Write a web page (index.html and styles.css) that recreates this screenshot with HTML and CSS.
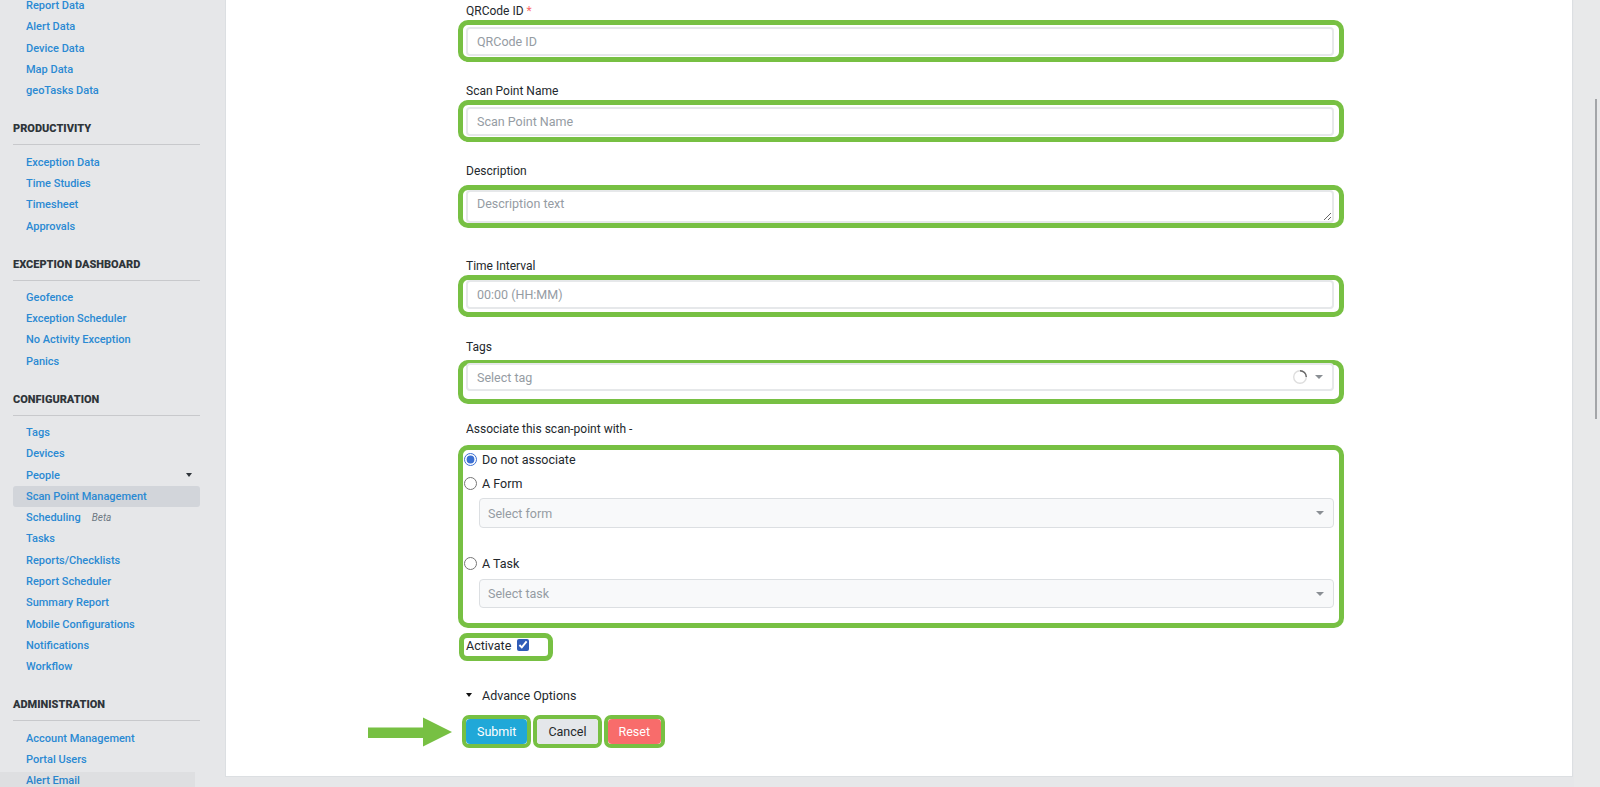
FILE: index.html
```html
<!DOCTYPE html>
<html lang="en">
<head>
  <meta charset="UTF-8">
  <meta name="viewport" content="width=device-width, initial-scale=1.0">
  <title>Scan Point Management</title>
  <link rel="stylesheet" href="styles.css">
</head>

<body>
  <div class="page">
    <!-- Sidebar -->
    <aside class="sidebar">
      <ul class="nav nav-first">
        <li><a class="nav-link" href="#">Report Data</a></li>
        <li><a class="nav-link" href="#">Alert Data</a></li>
        <li><a class="nav-link" href="#">Device Data</a></li>
        <li><a class="nav-link" href="#">Map Data</a></li>
        <li><a class="nav-link" href="#">geoTasks Data</a></li>
      </ul>

      <div class="nav-section">
        <h4 class="nav-title">PRODUCTIVITY</h4>
        <ul class="nav">
          <li><a class="nav-link" href="#">Exception Data</a></li>
          <li><a class="nav-link" href="#">Time Studies</a></li>
          <li><a class="nav-link" href="#">Timesheet</a></li>
          <li><a class="nav-link" href="#">Approvals</a></li>
        </ul>
      </div>

      <div class="nav-section">
        <h4 class="nav-title">EXCEPTION DASHBOARD</h4>
        <ul class="nav">
          <li><a class="nav-link" href="#">Geofence</a></li>
          <li><a class="nav-link" href="#">Exception Scheduler</a></li>
          <li><a class="nav-link" href="#">No Activity Exception</a></li>
          <li><a class="nav-link" href="#">Panics</a></li>
        </ul>
      </div>

      <div class="nav-section">
        <h4 class="nav-title">CONFIGURATION</h4>
        <ul class="nav">
          <li><a class="nav-link" href="#">Tags</a></li>
          <li><a class="nav-link" href="#">Devices</a></li>
          <li><a class="nav-link nav-dropdown" href="#">People <span class="nav-caret"></span></a></li>
          <li><a class="nav-link active" href="#">Scan Point Management</a></li>
          <li><a class="nav-link" href="#">Scheduling <span class="badge-beta">Beta</span></a></li>
          <li><a class="nav-link" href="#">Tasks</a></li>
          <li><a class="nav-link" href="#">Reports/Checklists</a></li>
          <li><a class="nav-link" href="#">Report Scheduler</a></li>
          <li><a class="nav-link" href="#">Summary Report</a></li>
          <li><a class="nav-link" href="#">Mobile Configurations</a></li>
          <li><a class="nav-link" href="#">Notifications</a></li>
          <li><a class="nav-link" href="#">Workflow</a></li>
        </ul>
      </div>

      <div class="nav-section">
        <h4 class="nav-title">ADMINISTRATION</h4>
        <ul class="nav">
          <li><a class="nav-link" href="#">Account Management</a></li>
          <li><a class="nav-link" href="#">Portal Users</a></li>
          <li><a class="nav-link" href="#">Alert Email</a></li>
        </ul>
      </div>

      <!-- browser status bubble -->
      <div class="status-url"></div>
    </aside>

    <!-- Main content -->
    <main class="main">
      <div class="card">
        <form class="scan-form">
          <div class="form-group">
            <label class="form-label">QRCode ID <span class="required">*</span></label>
            <div class="ring">
              <input class="form-control" type="text" placeholder="QRCode ID">
            </div>
          </div>

          <div class="form-group">
            <label class="form-label">Scan Point Name</label>
            <div class="ring">
              <input class="form-control" type="text" placeholder="Scan Point Name">
            </div>
          </div>

          <div class="form-group group-desc">
            <label class="form-label">Description</label>
            <div class="ring ring-desc">
              <textarea class="form-control textarea" placeholder="Description text"></textarea>
            </div>
          </div>

          <div class="form-group group-time">
            <label class="form-label">Time Interval</label>
            <div class="ring ring-time">
              <input class="form-control" type="text" placeholder="00:00 (HH:MM)">
            </div>
          </div>

          <div class="form-group group-tags">
            <label class="form-label">Tags</label>
            <div class="ring ring-tags">
              <div class="select select-tags">
                <span class="select-placeholder">Select tag</span>
                <span class="select-icons">
                  <svg class="spinner" width="16" height="16" viewBox="0 0 16 16">
                    <circle cx="8" cy="8" r="6.3" fill="none" stroke="#dedede" stroke-width="1.4"/>
                    <path d="M8 1.7 A6.3 6.3 0 0 1 14.3 8" fill="none" stroke="#666" stroke-width="1.4"/>
                  </svg>
                  <span class="caret"></span>
                </span>
              </div>
            </div>
          </div>

          <div class="form-group group-assoc">
            <label class="form-label">Associate this scan-point with -</label>
            <div class="ring ring-assoc">
              <label class="radio-row"><input type="radio" name="assoc" checked> Do not associate</label>
              <label class="radio-row"><input type="radio" name="assoc"> A Form</label>
              <div class="select select-sub select-form">
                <span class="select-placeholder">Select form</span>
                <span class="caret"></span>
              </div>
              <label class="radio-row radio-task"><input type="radio" name="assoc"> A Task</label>
              <div class="select select-sub select-task">
                <span class="select-placeholder">Select task</span>
                <span class="caret"></span>
              </div>
            </div>
          </div>

          <div class="activate-row">
            <label class="ring ring-activate">Activate <input type="checkbox" checked></label>
          </div>

          <div class="advance">
            <span class="advance-caret"></span>
            Advance Options
          </div>

          <div class="actions">
            <svg class="pointer-arrow" width="84" height="30" viewBox="0 0 84 30">
              <polygon points="0,10.5 55,10.5 55,0.5 84,15 55,29.5 55,21 0,21" fill="#77c043"/>
            </svg>
            <span class="ring ring-btn"><button type="button" class="btn btn-submit">Submit</button></span>
            <span class="ring ring-btn"><button type="button" class="btn btn-cancel">Cancel</button></span>
            <span class="ring ring-btn"><button type="button" class="btn btn-reset">Reset</button></span>
          </div>
        </form>
      </div>
    </main>

    <!-- Scrollbar -->
    <div class="scrollbar">
      <div class="scroll-thumb"></div>
    </div>
  </div>
</body>
</html>
```

FILE: styles.css
```css
html, body {
  margin: 0;
  padding: 0;
  height: 100%;
}

body {
  font-family: 'Roboto', 'Liberation Sans', sans-serif;
  background-color: #e6e7e9;
  color: #23282c;
  overflow: hidden;
}

.page {
  display: flex;
  height: 787px;
}

/* Sidebar */
.sidebar {
  position: relative;
  width: 212px;
  flex-shrink: 0;
  padding: 0 12px 0 13px;
  box-sizing: border-box;
  background-color: #e6e7e9;
  overflow: hidden;
}

.nav {
  list-style: none;
  margin: 0;
  padding: 6px 0 0;
}

.nav-first {
  margin-top: -5px;
  padding-top: 0;
}

.nav-link {
  display: flex;
  align-items: center;
  height: 21.3px;
  padding-left: 13px;
  font-size: 11px;
  font-weight: 500;
  color: #2b8ad3;
  text-decoration: none;
  border-radius: 3px;
}

.nav-link.active {
  background-color: #d2d5da;
}

.nav-dropdown {
  justify-content: space-between;
  padding-right: 8px;
}

.nav-caret {
  width: 0;
  height: 0;
  border-left: 3.5px solid transparent;
  border-right: 3.5px solid transparent;
  border-top: 4px solid #2f353a;
}

.badge-beta {
  margin-left: 11px;
  font-size: 10px;
  font-weight: 400;
  font-style: italic;
  color: #6f7a84;
}

.nav-section {
  margin-top: 20px;
}

.nav-title {
  margin: 0;
  padding-bottom: 7px;
  font-size: 11px;
  line-height: 16px;
  font-weight: 900;
  color: #2f353a;
  border-bottom: 1px solid #c8c9cc;
}

.status-url {
  position: absolute;
  left: 0;
  bottom: 0;
  width: 195px;
  height: 15px;
  background-color: rgba(0, 0, 0, 0.03);
}

/* Main */
.main {
  flex: 1;
  display: flex;
  flex-direction: column;
  padding: 0 1px 10px 13px;
}

.card {
  flex: 1;
  background: white;
  border: 1px solid #dcdfe2;
  border-top: none;
  padding: 3px 0 0 240px;
}

.scan-form {
  width: 868px;
}

.form-group {
  margin-bottom: 21px;
}

.form-label {
  display: block;
  margin-bottom: 1px;
  font-size: 12px;
  line-height: 16px;
  color: #23282c;
}

.required {
  color: #f86c6b;
}

/* green annotation rings */
.ring {
  display: block;
  border: 5px solid #77c043;
  border-radius: 10px;
  margin: 0 -10px 0 -8px;
  padding: 2px 5px 1px 3px;
}

.form-control {
  display: block;
  width: 100%;
  height: 29px;
  box-sizing: border-box;
  padding: 0 9px;
  border: 2px solid #e6e8ea;
  border-radius: 4px;
  font-family: 'Roboto', 'Liberation Sans', sans-serif;
  font-size: 12.5px;
  color: #5c6873;
  background: white;
  outline: none;
}

.form-control::placeholder {
  color: #959ca3;
}

.textarea {
  height: 33px;
  padding-top: 4px;
  resize: vertical;
}

.group-desc {
  margin-bottom: 30px;
}

.ring-desc {
  margin-top: 6px;
  padding: 0 5px 0 3px;
}

.group-time {
  margin-bottom: 22px;
}

.ring-time {
  margin-top: 1px;
  padding: 0 5px 3px 3px;
}

.group-tags {
  margin-bottom: 17px;
}

.ring-tags {
  margin-top: 5px;
  padding: 0 5px 8px 3px;
}

/* select boxes */
.select {
  display: flex;
  align-items: center;
  justify-content: space-between;
  height: 28px;
  box-sizing: border-box;
  padding: 0 9px;
  border: 2px solid #e6e8ea;
  border-radius: 4px;
  background: white;
  font-size: 12.5px;
}

.select-tags {
  margin-top: -2px;
}

.select-placeholder {
  color: #959ca3;
}

.select-icons {
  display: flex;
  align-items: center;
  gap: 7px;
}

.caret {
  width: 0;
  height: 0;
  border-left: 4px solid transparent;
  border-right: 4px solid transparent;
  border-top: 4px solid #8a8f94;
}

.select-sub {
  margin-left: 13px;
  height: 30px;
  padding-left: 8px;
  border: 1px solid #dcdfe2;
  background: #f8f9fa;
}

.select-form {
  margin-top: 5px;
  margin-bottom: 26px;
}

.select-task {
  margin-top: 7px;
  height: 29px;
}

/* associate radios */
.group-assoc {
  margin-bottom: 0;
}

.ring-assoc {
  margin-top: 8px;
  padding: 0 5px 15px 3px;
}

.radio-row {
  display: flex;
  align-items: center;
  gap: 5px;
  height: 18px;
  margin-left: -2px;
  margin-bottom: 6px;
  font-size: 12.5px;
}

.radio-row input {
  width: 13px;
  height: 13px;
  margin: 0;
  accent-color: #3b6fd2;
}

.radio-task {
  margin-bottom: 0;
}

/* activate */
.activate-row {
  display: flex;
}

.ring-activate {
  display: flex;
  align-items: center;
  margin: 5px 0 0 -7px;
  padding: 0 19px 4px 2px;
  height: 14px;
  border-radius: 8px;
  font-size: 12.5px;
}

.ring-activate input {
  width: 12px;
  height: 12px;
  margin: 0 0 0 6px;
  accent-color: #2e5cb8;
}

/* advance options */
.advance {
  display: flex;
  align-items: center;
  margin-top: 26px;
  height: 16px;
  font-size: 12.5px;
}

.advance-caret {
  width: 0;
  height: 0;
  margin: 0 10px 0 0;
  border-left: 3.5px solid transparent;
  border-right: 3.5px solid transparent;
  border-top: 4.5px solid #111;
}

/* buttons */
.actions {
  position: relative;
  display: flex;
  gap: 2px;
  margin: 12px 0 0 -4px;
}

.pointer-arrow {
  position: absolute;
  left: -94px;
  top: 2px;
}

.ring-btn {
  display: inline-block;
  margin: 0;
  padding: 0;
  border-width: 4px;
  border-radius: 7px;
}

.btn {
  display: block;
  height: 25px;
  padding: 0 11px;
  border: none;
  border-radius: 4px;
  font-family: 'Roboto', 'Liberation Sans', sans-serif;
  font-size: 12.5px;
  cursor: pointer;
}

.btn-submit {
  background-color: #20a8d8;
  color: white;
}

.btn-cancel {
  background-color: #e4e7ea;
  color: #23282c;
}

.btn-reset {
  background-color: #f86c6b;
  color: white;
}

/* Scrollbar */
.scrollbar {
  position: relative;
  width: 26px;
  flex-shrink: 0;
  background-color: #e8e9ea;
}

.scroll-thumb {
  position: absolute;
  right: 3px;
  top: 99px;
  width: 2px;
  height: 320px;
  background-color: #a3a5a8;
}
```
